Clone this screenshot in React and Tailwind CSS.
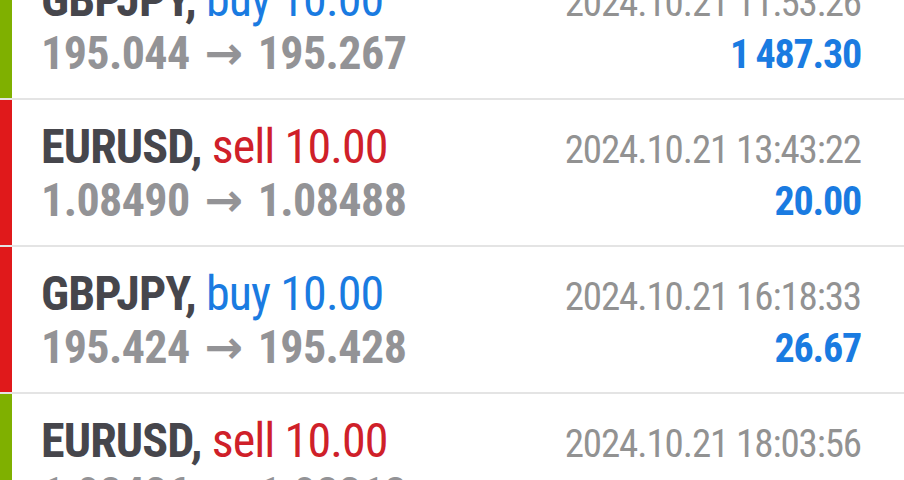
import React from 'react';

const trades = [
  { symbol: 'GBPJPY', side: 'buy', volume: '10.00', open: '195.044', close: '195.267', time: '2024.10.21 11:53:26', profit: '1\u2009487.30', bar: 'green' },
  { symbol: 'EURUSD', side: 'sell', volume: '10.00', open: '1.08490', close: '1.08488', time: '2024.10.21 13:43:22', profit: '20.00', bar: 'red' },
  { symbol: 'GBPJPY', side: 'buy', volume: '10.00', open: '195.424', close: '195.428', time: '2024.10.21 16:18:33', profit: '26.67', bar: 'red' },
  { symbol: 'EURUSD', side: 'sell', volume: '10.00', open: '1.08426', close: '1.08218', time: '2024.10.21 18:03:56', profit: '2\u2009080.00', bar: 'green' },
];

const font = { fontFamily: '"Roboto Condensed", Roboto, "Liberation Sans", sans-serif' };

const TradeRow = ({ trade }) => {
  const isBuy = trade.side === 'buy';
  return (
    <div className="flex h-[147px] border-b-2 border-[#e4e4e4] bg-white">
      <div className={`w-[12px] shrink-0 ${trade.bar === 'green' ? 'bg-[#7fb000]' : 'bg-[#e0191b]'}`} />
      <div className="flex-1 flex justify-between pl-[29px] pr-[43px] pt-[21px] font-stretch-condensed">
        <div className="flex flex-col">
          <div className="h-[52px] text-[48px] leading-[52px] tracking-[-0.9px] whitespace-nowrap">
            <span className="font-bold text-[#46464c]">{trade.symbol},</span>{' '}
            <span className={isBuy ? 'text-[#1a7be1]' : 'text-[#cf2029]'}>
              {trade.side} {trade.volume}
            </span>
          </div>
          <div className="h-[54px] flex items-center text-[46px] leading-[54px] font-bold text-[#939396] whitespace-nowrap tracking-[-0.6px]">
            <span>{trade.open}</span>
            <span className="mx-[12px] w-[44px] text-center font-bold text-[46px] font-stretch-normal font-['DejaVu_Sans']">→</span>
            <span>{trade.close}</span>
          </div>
        </div>
        <div className="flex flex-col items-end">
          <div className="h-[52px] flex items-end text-[39px] leading-[46px] tracking-[-1.1px] text-[#929292] whitespace-nowrap">
            {trade.time}
          </div>
          <div className="h-[54px] flex items-end text-[40px] leading-[50px] tracking-[-1.2px] font-bold text-[#1a7be1] whitespace-nowrap">
            {trade.profit}
          </div>
        </div>
      </div>
    </div>
  );
};

export default function App() {
  return (
    <div className="w-[904px] h-[480px] overflow-hidden bg-white" style={font}>
      <div className="-mt-[47px]">
        {trades.map((t) => (
          <TradeRow key={t.time} trade={t} />
        ))}
      </div>
    </div>
  );
}
